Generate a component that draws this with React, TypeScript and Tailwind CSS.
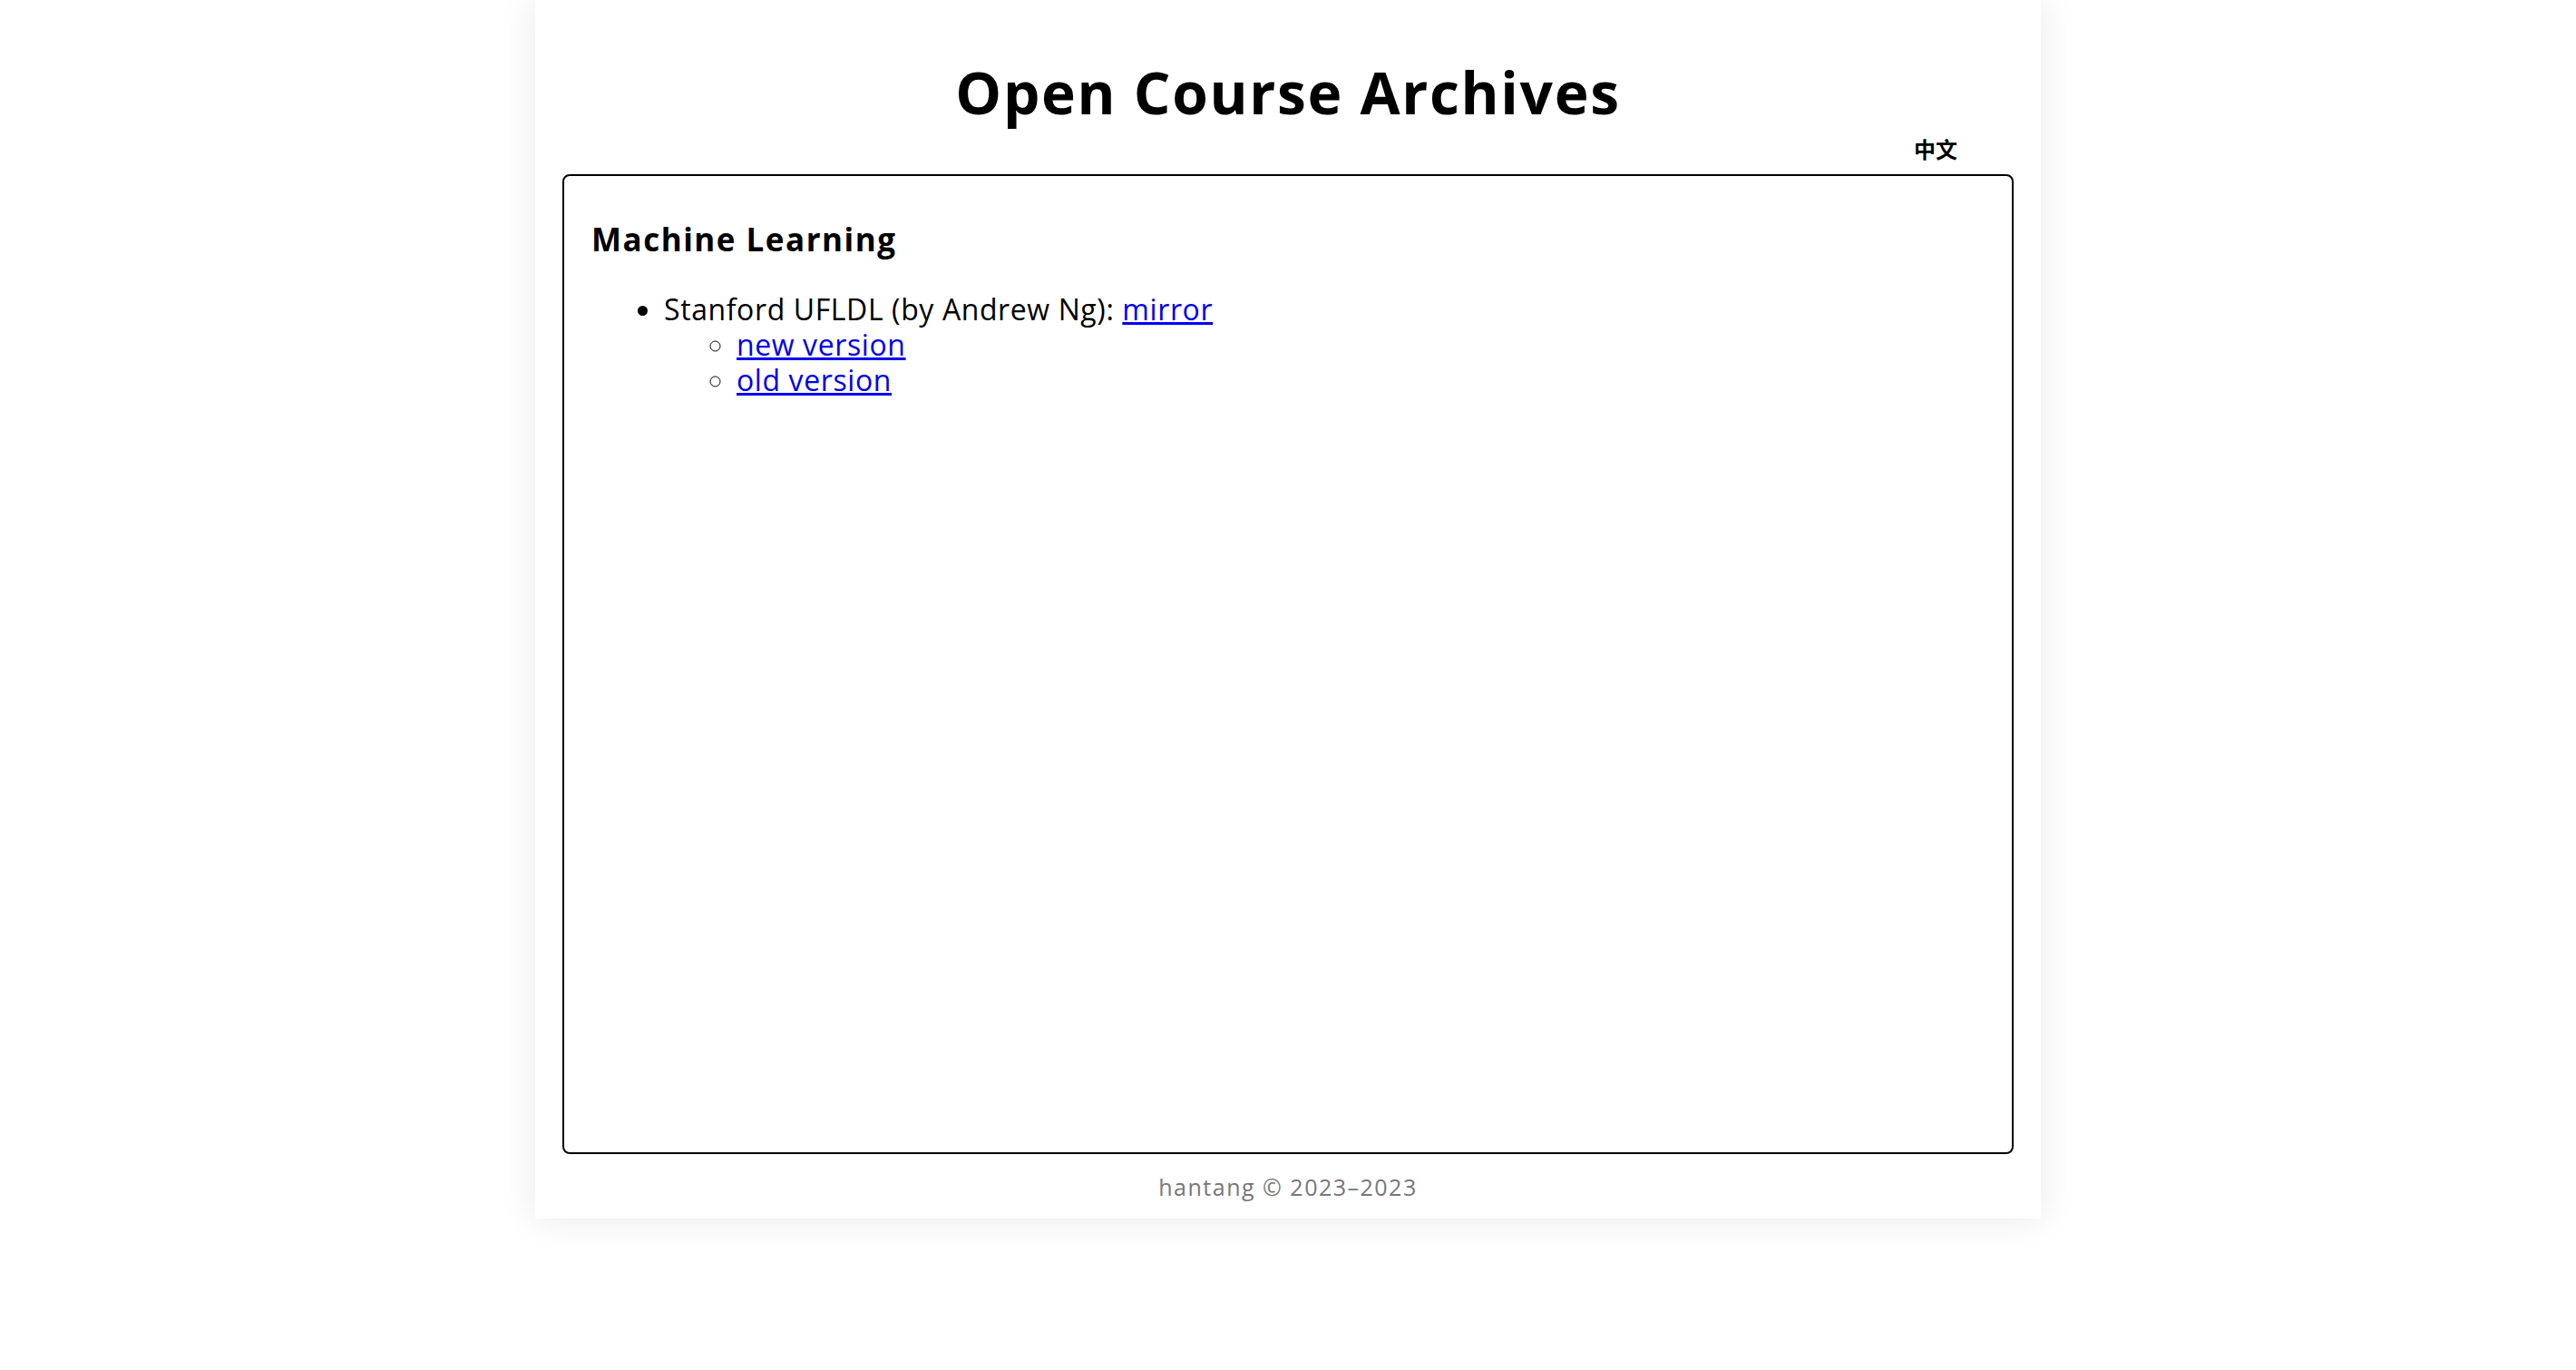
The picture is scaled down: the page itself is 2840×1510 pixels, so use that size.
import React from "react";

const ArchiveList: React.FC = () => {
  return (
    <ul className="mt-[37px] list-disc pl-[80px] text-[32px] leading-[39px] tracking-[0.6px]">
      <li>
        Stanford UFLDL (by Andrew Ng):{" "}
        <a href="#" className="text-[#0000ee] underline">
          mirror
        </a>
        <ul className="list-[circle] pl-[80px]">
          <li>
            <a href="#" className="text-[#0000ee] underline">
              new version
            </a>
          </li>
          <li>
            <a href="#" className="text-[#0000ee] underline">
              old version
            </a>
          </li>
        </ul>
      </li>
    </ul>
  );
};

const App: React.FC = () => {
  return (
    <div className="min-h-screen bg-white font-['Open_Sans','Noto_Sans_CJK_SC',sans-serif] text-black">
      <div className="mx-auto flex w-[1660px] flex-col bg-white px-[30px] pt-[63px] pb-[20px] shadow-[0_0_40px_rgba(0,0,0,0.09)]">
        <h1 className="text-center text-[64px] leading-[77px] font-bold tracking-[1.7px]">
          Open Course Archives
        </h1>
        <div className="mt-[10px] flex justify-end pr-[62px]">
          <a href="#" className="text-[24px] leading-[29px] font-bold">
            中文
          </a>
        </div>
        <div className="mt-[13px] h-[1080px] rounded-[8px] border-2 border-black px-[30px] pt-[49px]">
          <h3 className="text-[35px] leading-[41px] font-bold tracking-[1.5px]">
            Machine Learning
          </h3>
          <ArchiveList />
        </div>
        <footer className="mt-[21px] text-center text-[25px] leading-[30px] tracking-[1.5px] text-[#777]">
          hantang © 2023–2023
        </footer>
      </div>
    </div>
  );
};

export default App;
